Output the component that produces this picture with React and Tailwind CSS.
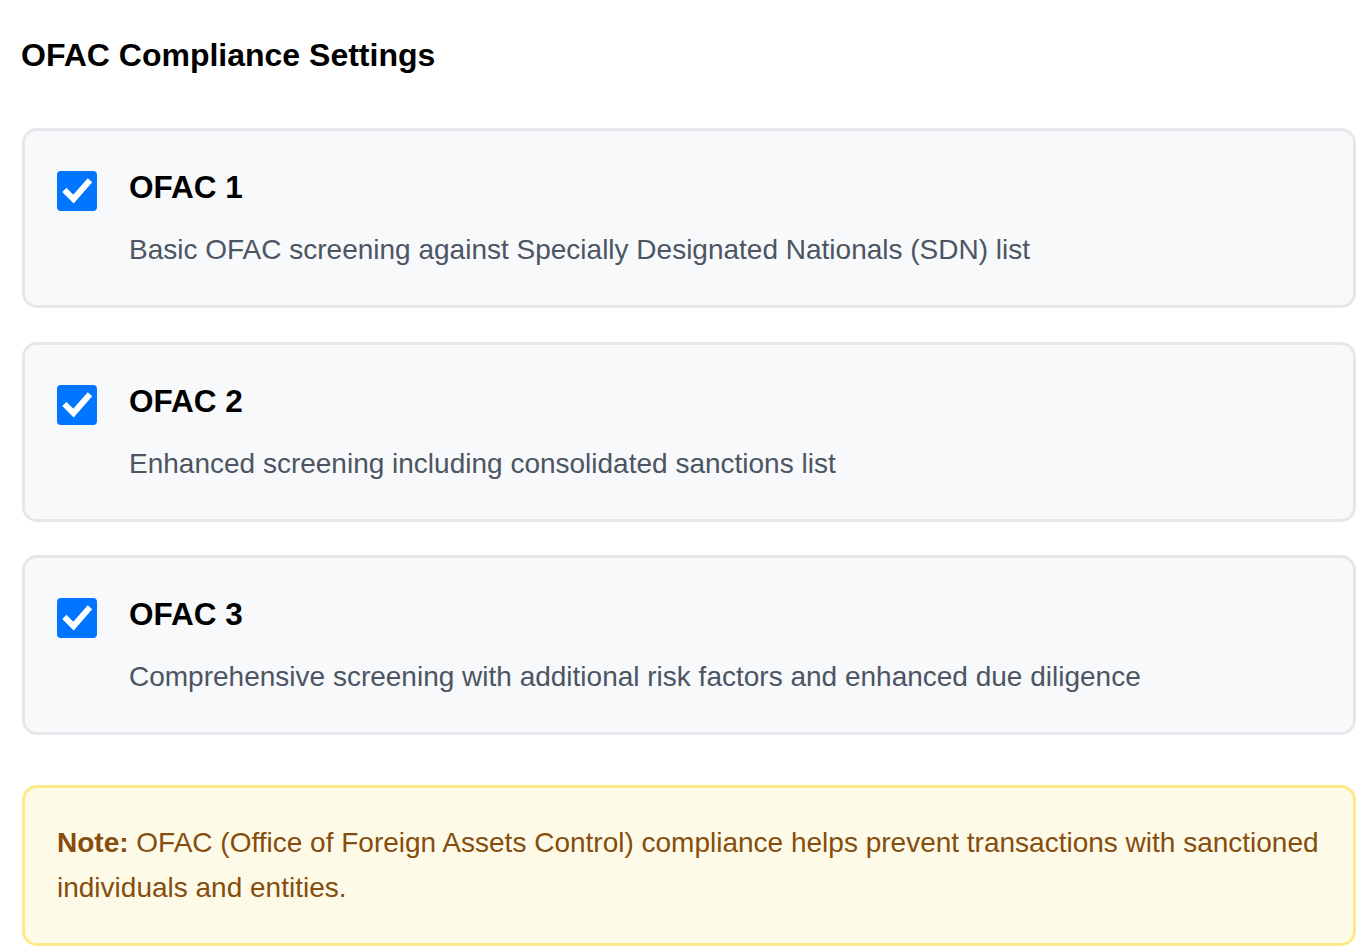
import React from "react";

const items = [
  { title: "OFAC 1", desc: "Basic OFAC screening against Specially Designated Nationals (SDN) list" },
  { title: "OFAC 2", desc: "Enhanced screening including consolidated sanctions list" },
  { title: "OFAC 3", desc: "Comprehensive screening with additional risk factors and enhanced due diligence" },
];

function Check() {
  return (
    <div className="w-[40px] h-[40px] mt-[2px] shrink-0 rounded-[4px] bg-[#0075ff]">
      <svg width="40" height="40" viewBox="0 0 40 40">
        <path d="M9.5 21 L16.5 28 L31 11.5" fill="none" stroke="#fff" strokeWidth="6" strokeLinecap="square" strokeLinejoin="miter" />
      </svg>
    </div>
  );
}

export default function App() {
  return (
    <div className="bg-white min-h-[952px] pl-[22px] pt-[37px]" style={{ fontFamily: '"Liberation Sans", Arial, sans-serif' }}>
      <h2 className="text-[32px] leading-[37px] font-bold text-black ml-[-1px]">OFAC Compliance Settings</h2>
      <div className="w-[1334px] mt-[54px] flex flex-col gap-[33.5px]">
        {items.map((it) => (
          <div key={it.title} className="border-[3px] border-[#e5e7eb] bg-[#f8f9fa] rounded-[15px] pl-[32px] pr-[32px] pt-[38px] pb-[34px] flex gap-[32px]">
            <Check />
            <div>
              <div className="text-[31.5px] leading-[36px] font-bold text-black">{it.title}</div>
              <div className="mt-[24px] text-[28px] leading-[42px] text-[#4b5563]">{it.desc}</div>
            </div>
          </div>
        ))}
      </div>
      <div className="w-[1334px] mt-[50px] border-[3px] border-[#fde98a] bg-[#fefae8] rounded-[15px] px-[32px] pt-[32px] pb-[33px] text-[28px] leading-[45px] text-[#854d0e]">
        <p><strong className="font-bold">Note:</strong> OFAC (Office of Foreign Assets Control) compliance helps prevent transactions with sanctioned individuals and entities.</p>
      </div>
    </div>
  );
}
